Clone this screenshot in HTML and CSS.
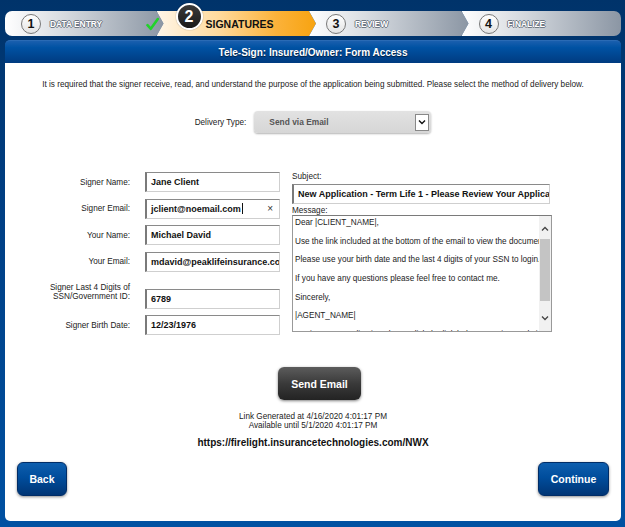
FILE: index.html
```html
<!DOCTYPE html>
<html>
<head>
<meta charset="utf-8">
<link rel="stylesheet" href="styles.css">
</head>
<body>
<div class="page">
  <div class="steps">
    <div class="step first">
      <span class="num">1</span><span class="label">DATA ENTRY</span>
      <svg class="check" viewBox="0 0 13 14" width="13" height="14"><path d="M1.5 8.2 L4.8 11.8 L11.8 2" fill="none" stroke="#22d22a" stroke-width="2.6" stroke-linecap="round" stroke-linejoin="round"/></svg>
    </div>
    <div class="step active">
      <span class="num big">2</span><span class="label">SIGNATURES</span>
    </div>
    <div class="step">
      <span class="num">3</span><span class="label">REVIEW</span>
    </div>
    <div class="step last">
      <span class="num">4</span><span class="label">FINALIZE</span>
    </div>
  </div>

  <div class="panel">
    <div class="panel-head">Tele-Sign: Insured/Owner: Form Access</div>
    <div class="panel-body">
      <p class="intro">It is required that the signer receive, read, and understand the purpose of the application being submitted. Please select the method of delivery below.</p>

      <div class="delivery">
        <span class="lbl">Delivery Type:</span>
        <div class="select">
          <span class="select-text">Send via Email</span>
          <span class="select-btn"><svg viewBox="0 0 8 6" width="8" height="6"><path d="M1 1.5 L4 4.5 L7 1.5" fill="none" stroke="#111" stroke-width="1.4"/></svg></span>
        </div>
      </div>

      <div class="form">
        <div class="fields">
          <span class="lbl">Signer Name:</span>
          <div class="field">Jane Client</div>
          <span class="lbl">Signer Email:</span>
          <div class="field"><span>jclient@noemail.com</span><span class="caret"></span><span class="clear">×</span></div>
          <span class="lbl">Your Name:</span>
          <div class="field">Michael David</div>
          <span class="lbl">Your Email:</span>
          <div class="field">mdavid@peaklifeinsurance.com</div>
          <span class="lbl two">Signer Last 4 Digits of<br>SSN/Government ID:</span>
          <div class="field low">6789</div>
          <span class="lbl">Signer Birth Date:</span>
          <div class="field">12/23/1976</div>
        </div>

        <div class="email">
          <div class="small-lbl">Subject:</div>
          <div class="field subject">New Application - Term Life 1 - Please Review Your Application</div>
          <div class="small-lbl msg-lbl">Message:</div>
          <div class="message">
            <div class="msg-text">
              <p>Dear |CLIENT_NAME|,</p>
              <p>Use the link included at the bottom of the email to view the documents.</p>
              <p>Please use your birth date and the last 4 digits of your SSN to login.</p>
              <p>If you have any questions please feel free to contact me.</p>
              <p>Sincerely,</p>
              <p>|AGENT_NAME|</p>
              <p>To view your application please click the link below to review and sign.</p>
            </div>
            <div class="scrollbar">
              <span class="arrow up"><svg viewBox="0 0 8 6" width="8" height="6"><path d="M1 4.5 L4 1.5 L7 4.5" fill="none" stroke="#444" stroke-width="1.3"/></svg></span>
              <span class="thumb"></span>
              <span class="arrow down"><svg viewBox="0 0 8 6" width="8" height="6"><path d="M1 1.5 L4 4.5 L7 1.5" fill="none" stroke="#444" stroke-width="1.3"/></svg></span>
            </div>
          </div>
        </div>
      </div>

      <div class="send-row"><button class="btn-dark">Send Email</button></div>
      <div class="link-info">Link Generated at 4/16/2020 4:01:17 PM<br>Available until 5/1/2020 4:01:17 PM</div>
      <div class="url">https://firelight.insurancetechnologies.com/NWX</div>

      <div class="nav">
        <button class="btn-blue back">Back</button>
        <button class="btn-blue cont">Continue</button>
      </div>
    </div>
  </div>
</div>
</body>
</html>
```

FILE: styles.css
```css
* { box-sizing: border-box; }
html, body { margin: 0; padding: 0; }
body {
  width: 625px;
  height: 527px;
  overflow: hidden;
  background: linear-gradient(to bottom, #00336a 0%, #003f84 40%, #0051a2 100%);
  font-family: "Liberation Sans", Arial, sans-serif;
}
.page { padding-top: 11px; }

/* Steps */
.steps {
  display: flex;
  height: 25px;
  margin: 0 4px 0 5px;
}
.step {
  flex: 1;
  position: relative;
  isolation: isolate;
  display: flex;
  align-items: center;
  padding-left: 17px;
  margin-left: -7px;
}
.step::before {
  content: "";
  position: absolute;
  inset: 0;
  z-index: -1;
  background: linear-gradient(to right, #ffffff 0%, #d9dde2 35%, #8b96a4 100%);
  clip-path: polygon(0 0, calc(100% - 7px) 0, 100% 50%, calc(100% - 7px) 100%, 0 100%, 7px 50%);
}
.step.first { margin-left: 0; padding-left: 16px; }
.step.first::before {
  clip-path: polygon(0 0, calc(100% - 7px) 0, 100% 50%, calc(100% - 7px) 100%, 0 100%);
  border-radius: 7px 0 0 7px;
}
.step.last::before {
  clip-path: polygon(0 0, 100% 0, 100% 100%, 0 100%, 7px 50%);
  border-radius: 0 7px 7px 0;
}
.step.active::before {
  background: linear-gradient(to right, #fff6e8 0%, #ffd99a 40%, #fbb23a 75%, #f7a310 100%);
}
.num {
  flex: none;
  width: 20px;
  height: 20px;
  border-radius: 50%;
  border: 1.5px solid #787878;
  background: linear-gradient(to bottom, #ffffff, #e4e4e4);
  display: flex;
  align-items: center;
  justify-content: center;
  font-weight: bold;
  font-size: 12.5px;
  color: #111;
}
.num.big {
  width: 27px;
  height: 27px;
  align-self: flex-start;
  margin-top: -8px;
  margin-left: 2px;
  border: 2px solid #fff;
  background: linear-gradient(to bottom, #3a3a3a, #1a1a1a);
  color: #fff;
  font-size: 16px;
  box-shadow: 0 0 1px rgba(0,0,0,0.6);
}
.label {
  margin-left: 9px;
  font-weight: bold;
  font-size: 8.4px;
  color: #fff;
  text-shadow: 1px 0 0 #6f7884, -1px 0 0 #6f7884, 0 1px 0 #6f7884, 0 -1px 0 #6f7884;
}
.active .label {
  margin-left: 3px;
  font-size: 10.5px;
  color: #111;
  text-shadow: none;
  margin-top: 1px;
}
.check { margin-left: auto; margin-right: 5px; flex: none; }

/* Panel */
.panel { margin: 4px 4px 0 5px; }
.panel-head {
  height: 23px;
  display: flex;
  align-items: center;
  justify-content: center;
  color: #fff;
  font-weight: bold;
  font-size: 10px;
  background: linear-gradient(to bottom, #1a5fae 0%, #0052a3 30%, #003b80 100%);
  border-radius: 5px 5px 0 0;
  border-top: 1px solid #2a6bb5;
  text-shadow: 0 1px 1px rgba(0,0,0,0.6);
}
.panel-body {
  background: #fff;
  height: 458px;
  border-radius: 0 0 5px 5px;
  padding-top: 17px;
}
.intro {
  margin: 0;
  text-align: center;
  font-size: 8.2px;
  line-height: 10px;
  color: #222;
}
.lbl {
  font-size: 8.2px;
  color: #222;
  text-align: right;
}

/* Delivery */
.delivery {
  margin-top: 21px;
  display: flex;
  justify-content: center;
  align-items: center;
  gap: 8px;
  height: 22px;
}
.select {
  width: 177px;
  height: 22px;
  background: linear-gradient(to bottom, #e2e2e2, #d6d6d6);
  border-radius: 4px;
  box-shadow: 0 1px 2px rgba(0,0,0,0.3);
  display: flex;
  align-items: center;
  padding-left: 15px;
  padding-right: 2px;
}
.select-text {
  flex: 1;
  font-weight: bold;
  font-size: 8.4px;
  color: #555;
}
.select-btn {
  width: 14px;
  height: 17px;
  background: #fff;
  border: 1px solid #888;
  display: flex;
  align-items: center;
  justify-content: center;
}

/* Form */
.form {
  margin-top: 39px;
  display: flex;
  align-items: flex-start;
}
.fields {
  display: grid;
  grid-template-columns: 125px 135px;
  grid-template-rows: 20px 20px 20px 20px 30px 20px;
  column-gap: 15px;
  row-gap: 6.67px;
  align-items: center;
}
.lbl.two { line-height: 8.5px; align-self: center; margin-top: -2px; }
.field {
  height: 20px;
  display: flex;
  align-items: center;
  padding-left: 4px;
  border: 1px solid #cfcfcf;
  border-top-color: #8a8a8a;
  border-left: 2px solid #7a7a7a;
  background: #fff;
  font-weight: bold;
  font-size: 9px;
  color: #111;
  white-space: nowrap;
  overflow: hidden;
}
.field.low { align-self: end; }
.caret {
  width: 1px;
  height: 11px;
  background: #111;
  margin-left: 1px;
}
.clear {
  margin-left: auto;
  margin-right: 6px;
  font-weight: normal;
  font-size: 10px;
  color: #333;
}
.email {
  margin-left: 12px;
  width: 260px;
}
.small-lbl {
  font-size: 8.2px;
  line-height: 9px;
  color: #222;
}
.field.subject {
  margin-top: 3px;
  width: 258px;
}
.msg-lbl { margin-top: 2px; }
.message {
  height: 117px;
  border: 1px solid #999;
  border-top-color: #7a7a7a;
  display: flex;
  overflow: hidden;
}
.msg-text {
  flex: 1;
  overflow: hidden;
  padding: 2px 0 0 2px;
  font-size: 8.2px;
  line-height: 9.5px;
  color: #222;
  white-space: nowrap;
}
.msg-text p { margin: 0 0 9.2px; }
.scrollbar {
  width: 12px;
  flex: none;
  background: #f1f1f1;
  display: flex;
  flex-direction: column;
  align-items: center;
  padding-top: 9px;
}
.arrow {
  display: flex;
  align-items: center;
  justify-content: center;
  width: 12px;
  height: 8px;
}
.thumb {
  width: 10px;
  height: 62px;
  margin-top: 6px;
  background: #c4c4c4;
}
.arrow.down { margin-top: 13px; }

/* Send */
.send-row {
  margin-top: 32px;
  display: flex;
  justify-content: center;
  padding-left: 13px;
}
.btn-dark {
  width: 83px;
  height: 33px;
  border: none;
  border-radius: 6px;
  background: linear-gradient(to bottom, #5c5c5c 0%, #3a3a3a 50%, #232323 100%);
  box-shadow: 0 1px 3px rgba(0,0,0,0.5);
  color: #fff;
  font-family: "Liberation Sans", Arial, sans-serif;
  font-weight: bold;
  font-size: 10.5px;
  padding: 0;
}
.link-info {
  margin-top: 12px;
  text-align: center;
  font-size: 8.2px;
  line-height: 9px;
  color: #222;
}
.url {
  margin-top: 7px;
  text-align: center;
  font-weight: bold;
  font-size: 10px;
  line-height: 12px;
  color: #111;
}
.nav {
  margin-top: 12.7px;
  padding: 0 12px;
  display: flex;
  justify-content: space-between;
}
.btn-blue {
  height: 34px;
  border: 1px solid #002c66;
  border-radius: 6px;
  background: linear-gradient(to bottom, #0d5eae 0%, #004d9c 45%, #003575 100%);
  box-shadow: 0 1px 3px rgba(0,0,0,0.45);
  color: #fff;
  font-family: "Liberation Sans", Arial, sans-serif;
  font-weight: bold;
  font-size: 10.5px;
  padding: 0;
}
.btn-blue.back { width: 50px; }
.btn-blue.cont { width: 71px; }
```
